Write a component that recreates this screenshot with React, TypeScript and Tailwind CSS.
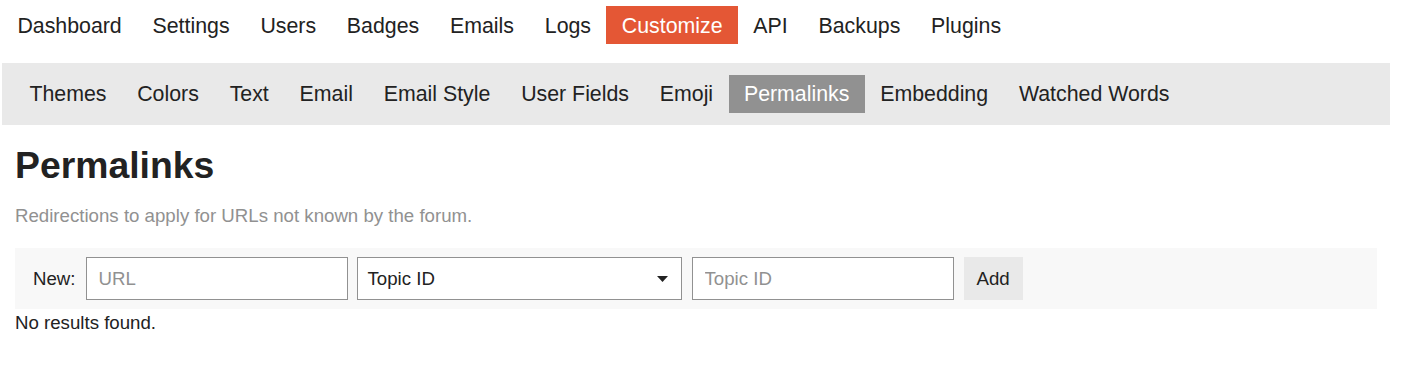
import React from "react";

const mainTabs = ["Dashboard", "Settings", "Users", "Badges", "Emails", "Logs", "Customize", "API", "Backups", "Plugins"];
const subTabs = ["Themes", "Colors", "Text", "Email", "Email Style", "User Fields", "Emoji", "Permalinks", "Embedding", "Watched Words"];

const App = () => {
  return (
    <div className="min-h-screen bg-white font-['Liberation_Sans',Arial,sans-serif] text-[#222222]">
      {/* top admin nav */}
      <nav className="flex pl-[2px] pt-[6px]">
        {mainTabs.map((t) => (
          <a
            key={t}
            href="#"
            className={
              t === "Customize"
                ? "px-[15.4px] pt-[7px] pb-[5px] text-[21.33px] leading-[26px] bg-[#e45735] text-white"
                : "px-[15.4px] pt-[7px] pb-[5px] text-[21.33px] leading-[26px] text-[#222222]"
            }
          >
            {t}
          </a>
        ))}
      </nav>

      {/* customize sub nav */}
      <nav className="mt-[19px] ml-[2px] w-[1388px] flex bg-[#e9e9e9] pl-[12px] py-[12px]">
        {subTabs.map((t) => (
          <a
            key={t}
            href="#"
            className={
              t === "Permalinks"
                ? "px-[15.4px] pt-[6px] pb-[6px] text-[21.33px] leading-[26px] bg-[#919191] text-white"
                : "px-[15.4px] pt-[6px] pb-[6px] text-[21.33px] leading-[26px] text-[#222222]"
            }
          >
            {t}
          </a>
        ))}
      </nav>

      <div className="px-[15px]">
        <h1 className="mt-[18px] text-[37.33px] font-bold leading-[44px]">Permalinks</h1>
        <p className="mt-[17px] text-[18.67px] leading-[24px] text-[#919191]">
          Redirections to apply for URLs not known by the forum.
        </p>

        <div className="mt-[20px] w-[1362px] h-[61px] flex items-center bg-[#f8f8f8] pl-[18px]">
          <label className="text-[18.67px] leading-[24px]">New:</label>
          <input
            type="text"
            placeholder="URL"
            className="ml-[10px] w-[262px] h-[43px] border border-[#919191] bg-white pl-[12px] text-[18.67px] placeholder:text-[#919191] outline-none"
          />
          <div className="ml-[9px] w-[325px] h-[43px] border border-[#919191] bg-white pl-[10px] pr-[13px] flex items-center justify-between text-[18.67px]">
            <span>Topic ID</span>
            <svg width="11" height="6" viewBox="0 0 11 6">
              <path d="M0 0 H11 L5.5 6 Z" fill="#222222" />
            </svg>
          </div>
          <input
            type="text"
            placeholder="Topic ID"
            className="ml-[10px] w-[262px] h-[43px] border border-[#919191] bg-white pl-[12px] text-[18.67px] placeholder:text-[#919191] outline-none"
          />
          <button className="ml-[10px] h-[43px] px-[13px] bg-[#e9e9e9] text-[18.67px] text-[#222222]">Add</button>
        </div>

        <p className="mt-[2px] text-[18.67px] leading-[24px]">No results found.</p>
      </div>
    </div>
  );
};

export default App;
